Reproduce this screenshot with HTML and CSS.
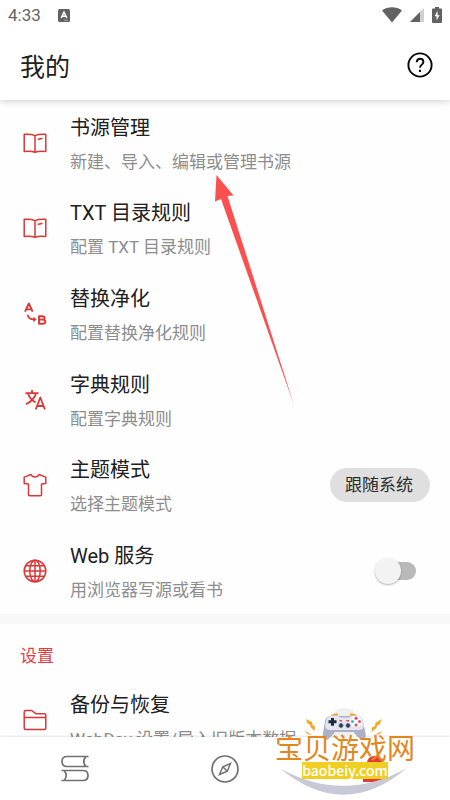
FILE: index.html
```html
<!DOCTYPE html>
<html lang="zh-CN">
<head>
<meta charset="utf-8">
<meta name="viewport" content="width=device-width, initial-scale=1">
<title>我的</title>
<link rel="stylesheet" href="styles.css">
</head>
<body>
<div class="app">
  <header class="top">
    <div class="status">
      <span class="clock">4:33</span>
      <svg class="status-badge" width="12" height="13" viewBox="0 0 12 13"><rect width="12" height="13" rx="1.5" fill="#626262"/><path d="M3.2 9 6 3.2 8.8 9M4.2 7.2h3.6" fill="none" stroke="#fff" stroke-width="1.5"/><path d="M6 11.2h4" stroke="#aaa"/></svg>
      <span class="status-right">
        <svg width="20" height="16" viewBox="0 0 20 16"><path d="M0 3.6C5.5-.8 14.5-.8 20 3.6L10 15.5Z" fill="#626262"/></svg>
        <svg width="14" height="14" viewBox="0 0 14 14"><path d="M0 14 14 0V14Z" fill="#d0d0d0"/><path d="M0 14 10 4V14Z" fill="#626262"/></svg>
        <svg width="10" height="16" viewBox="0 0 10 16"><path d="M3 0h4v1.6h2Q10 1.6 10 2.6V15q0 1-1 1H1q-1 0-1-1V2.600Q0 1.600 1 1.600H3Z" fill="#626262"/><path d="M5.600 3.800 2.600 9.300h2v4.200L7.600 8h-2Z" fill="#fff"/></svg>
      </span>
    </div>
    <div class="title-bar">
      <h1>我的</h1>
      <button class="help" type="button" aria-label="帮助">
        <svg width="26" height="26" viewBox="0 0 26 26" fill="none" stroke="#080808"><circle cx="13" cy="13" r="11.600" stroke-width="1.900"/><path d="M9.700 10.300C9.700 8 11 6.800 13 6.800s3.400 1.300 3.400 3.200c0 2.600-3.400 2.700-3.400 5.700" stroke-width="1.900"/><path d="M13 17.800v2.100" stroke-width="2"/></svg>
      </button>
    </div>
  </header>

  <main class="content">
    <div class="list">
      <a class="row" href="#sources">
        <svg class="icon" viewBox="0 0 24 24"><path d="M12 4.600C8.500 3 5 3 1.200 3.300v17.200C5 20 8.500 20 12 21.200c3.500-1.200 7-1.200 10.800-.7V3.300C19 3 15.500 3 12 4.600Zm0 0v16.600M14.700 8.500l4.800-1.300"/></svg>
        <span class="text"><span class="name">书源管理</span><span class="desc">新建、导入、编辑或管理书源</span></span>
      </a>
      <a class="row" href="#toc">
        <svg class="icon" viewBox="0 0 24 24"><path d="M12 4.600C8.500 3 5 3 1.200 3.300v17.200C5 20 8.500 20 12 21.200c3.500-1.200 7-1.200 10.800-.7V3.300C19 3 15.500 3 12 4.600Zm0 0v16.600M14.700 8.500l4.800-1.300"/></svg>
        <span class="text"><span class="name">TXT 目录规则</span><span class="desc">配置 TXT 目录规则</span></span>
      </a>
      <a class="row" href="#replace">
        <svg class="icon" viewBox="0 0 24 24"><path stroke-width="1.900" d="M2 9.700 5.800 1.500l3.800 8.200M3.200 7.400h5.200"/><path stroke-width="1.900" d="M16 14.200v7.600h3.500q2.900 0 2.900-2.100t-2.900-2.100H16h3q2.600 0 2.600-1.700T19 14.200Z"/><path stroke-width="1.700" d="M4.500 12.800q1 4.500 6.500 4.600"/><path d="M10.300 14.700 13.700 17.500l-3.400 2.700Z" fill="currentColor" stroke="none"/></svg>
        <span class="text"><span class="name">替换净化</span><span class="desc">配置替换净化规则</span></span>
      </a>
      <a class="row" href="#dict">
        <svg class="icon" viewBox="0 0 24 24"><path stroke-width="1.800" d="M2.500 5.200h13M9 2v3M13 5.200C11.800 10 7.500 14 3 16.200M5 5.200c1.200 4 4 7.300 7.500 9.200M12.700 21.500l4.600-12 4.600 12M14 18h6.600"/></svg>
        <span class="text"><span class="name">字典规则</span><span class="desc">配置字典规则</span></span>
      </a>
      <div class="row">
        <svg class="icon" viewBox="0 0 24 24"><path d="M8 1.500Q9 4 12 4t4-2.500l6.800 2.600v6.500l-4.300.5v10.500q0 1.200-1.200 1.200H6.700q-1.200 0-1.200-1.200V11.100l-4.300-.5V4.100Z"/></svg>
        <span class="text"><label class="name" for="theme">主题模式</label><span class="desc">选择主题模式</span></span>
        <select class="pill" id="theme"><option>跟随系统</option></select>
      </div>
      <div class="row">
        <svg class="icon" viewBox="0 0 24 24"><circle cx="12" cy="12" r="10.800"/><ellipse cx="12" cy="12" rx="5.200" ry="10.800"/><path d="M12 1.200v21.600M1.200 12h21.600M3 6.700h18M3 17.300h18"/></svg>
        <span class="text"><label class="name" for="web">Web 服务</label><span class="desc">用浏览器写源或看书</span></span>
        <input class="switch" id="web" type="checkbox" role="switch">
      </div>
    </div>
    <section class="settings">
      <h2>设置</h2>
      <a class="row" href="#backup">
        <svg class="icon" viewBox="0 0 24 24"><path d="M1.200 20V4q0-1.500 1.500-1.500h6l4 3.200h8.600q1.500 0 1.500 1.500V20q0 1.500-1.500 1.500H2.700Q1.200 21.500 1.200 20ZM1.200 9.600h21.600"/></svg>
        <span class="text"><span class="name">备份与恢复</span><span class="desc">WebDav 设置/导入旧版本数据</span></span>
      </a>
    </section>
  </main>

  <nav class="tabs">
    <a href="#shelf" aria-label="书架"><svg width="30" height="30" viewBox="0 0 30 30" fill="none" stroke="#717171" stroke-width="1.700"><path d="M28.500 2.500H7q-5 0-5 5t5 5h21.500M25.800 2.500q-4 5 0 10M1.500 16.500H23q5 0 5 5t-5 5H1.500M4.200 16.500q4 5 0 10"/></svg></a>
    <a href="#discover" aria-label="发现"><svg width="30" height="30" viewBox="0 0 30 30" fill="none" stroke="#717171" stroke-width="1.700"><circle cx="15" cy="15" r="13"/><path d="m20.500 9.500-3.300 7.700-7.700 3.300 3.300-7.700ZM12.800 12.800l4.400 4.400" stroke-width="1.500"/></svg></a>
    <a href="#me" aria-label="我的"><svg width="30" height="30" viewBox="0 0 30 30" fill="#e53935"><path d="M15 2q8 0 8 8t-8 8-8-8 8-8Z"/><path d="M3 28v-3q0-6 7-7h10q7 1 7 7v3Z"/></svg></a>
  </nav>

  <svg class="arrow" width="80" height="232" viewBox="0 0 80 232"><path d="M2.500 1 19.500 21.500 13.500 22 80 231 7 25 1 27.500Z" fill="#fb5050"/></svg>

  <div class="watermark">
    <svg class="art" width="140" height="92" viewBox="0 0 140 92">
      <circle cx="69" cy="19" r="15" fill="#efefef"/>
      <path d="M6 65Q69 99 132 64 69 117 6 65Z" fill="#c7c9d6"/>
      <g fill="#f5a623"><path d="m31 15 6 3 .5 3 2.500 1.500-.5 4.500-4-4-.5-2.500-2.500-1Z"/><path d="m106.500 15-6 4-.5 3-3 1.500-.5 4.500 5-4 .5-2.500 3-1.500Z"/><path d="m30 27 7 4-5-1Zm77 0-7 4 5-1Z"/></g>
      <path d="M56 12v-1q3-2 7-1.500v3M75 12.500v-3q4-.5 7 1.500v1" fill="#f0a028"/>
      <path d="M56 12h26q5 0 6 5l2.500 12q1 7-3 7-3 0-9-8H60q-6 8-9 8-4 0-3-7l2-12q1-5 6-5Z" fill="#aeb0c4"/>
      <path d="M57 11.500h6q1 2 3 2h7q2 0 3-2h6q4 0 5.500 4L89 22q-1 4-5 4H55q-4 0-5-4l1.500-6.500Q53 11.500 57 11.500Z" fill="#e4e5ef"/>
      <circle cx="81" cy="17.500" r="5.800" fill="#fafaff"/>
      <path d="M56 14h3v2.300h2.500v3H59v2.400h-3v-2.400h-2.500v-3H56Z" fill="#182c3d"/>
      <circle cx="81" cy="14.200" r="1.500" fill="#f04050"/><circle cx="81" cy="21" r="1.500" fill="#e84860"/><circle cx="77.500" cy="17.600" r="1.500" fill="#45b8cf"/><circle cx="84.500" cy="17.600" r="1.500" fill="#e95060"/>
      <g fill="#263746" stroke="#596f94"><circle cx="66" cy="21.500" r="2"/><circle cx="73" cy="21.500" r="2"/></g>
      <path d="M64.500 16.700H67m4.500 0H74" stroke="#e84850" stroke-width="1.500"/>
    </svg>
    <span class="brand">宝贝游戏网</span>
    <span class="site">baobeiy.com</span>
  </div>
</div>
</body>
</html>
```
FILE: styles.css
```css
* { box-sizing: border-box; }

body {
  margin: 0;
  background: #fefefe;
  color: #202020;
  font-family: Roboto, "Noto Sans CJK SC", sans-serif;
}

a { color: inherit; text-decoration: none; }

.app {
  position: relative;
  display: flex;
  flex-direction: column;
  height: 100vh;
  overflow: hidden;
}

.top {
  flex: none;
  z-index: 1;
  background: #fff;
  box-shadow: 0 1px 7px rgba(0, 0, 0, 0.2);
}

.status {
  display: flex;
  align-items: center;
  gap: 17px;
  height: 30px;
  padding: 0 8px;
  color: #666;
  font-size: 17px;
}

.status-right {
  display: flex;
  align-items: center;
  gap: 8px;
  margin-left: auto;
}

.title-bar {
  display: flex;
  align-items: center;
  justify-content: space-between;
  height: 70px;
  padding: 0 17px 0 20px;
}

h1 {
  margin: 0;
  font-size: 25px;
  font-weight: 400;
}

.help {
  display: flex;
  padding: 0;
  border: 0;
  background: none;
}

.content {
  flex: 1;
  min-height: 0;
  overflow: hidden;
}

.list {
  display: grid;
  grid-auto-rows: 1fr;
  min-height: 514px;
}

.row {
  display: flex;
  align-items: center;
  padding: 0 20px 0 23px;
}

.icon {
  flex: none;
  width: 24px;
  height: 24px;
  fill: none;
  stroke: currentColor;
  stroke-width: 1.5;
  stroke-linejoin: round;
  color: #dc3737;
}

.text {
  display: flex;
  flex: 1;
  flex-direction: column;
  margin-left: 23px;
  padding-top: 4px;
  line-height: 34px;
  white-space: nowrap;
}

.name { font-size: 20px; }

.desc {
  color: #8d8d8d;
  font-size: 17px;
}

.pill {
  width: 100px;
  height: 34px;
  padding: 0 15px;
  border: 0;
  border-radius: 17px;
  appearance: none;
  background: #dfdfdf;
  color: #2b2b2b;
  font-family: inherit;
  font-size: 17px;
}

.switch {
  position: relative;
  width: 40px;
  height: 18px;
  margin: 0 14px 0 0;
  border-radius: 9px;
  appearance: none;
  background: linear-gradient(90deg, transparent 10px, #b9b9b9 10px);
}

.switch::before {
  content: "";
  position: absolute;
  top: -4px;
  left: -1px;
  width: 26px;
  height: 26px;
  border-radius: 50%;
  background: #f3f3f3;
  box-shadow: 0 1px 2px rgba(0, 0, 0, 0.3);
}

.settings { border-top: 10px solid #f8f8f8; }

h2 {
  margin: 0;
  padding: 15px 20px 4px;
  color: #e53c3c;
  font-size: 17px;
  font-weight: 400;
  line-height: 34px;
}

.settings .row { height: 86px; }

.tabs {
  display: flex;
  flex: none;
  z-index: 1;
  height: 63px;
  background: #fff;
  box-shadow: 0 -1px 2px rgba(0, 0, 0, 0.1);
}

.tabs a {
  display: flex;
  flex: 1;
  align-items: center;
  justify-content: center;
}

.arrow {
  position: absolute;
  top: 174px;
  left: 214px;
}

.watermark {
  position: absolute;
  right: 35px;
  bottom: 4px;
  z-index: 2;
  display: flex;
  flex-direction: column;
  align-items: center;
  width: 140px;
  height: 92px;
  padding-top: 28px;
  font-family: "Noto Sans CJK SC", sans-serif;
}

.art {
  position: absolute;
  top: 0;
  left: 0;
}

.brand {
  position: relative;
  color: #e3871d;
  font-size: 28px;
  line-height: 30px;
  white-space: nowrap;
}

.site {
  position: relative;
  width: 86px;
  background: #efcf22;
  color: #fff;
  font-size: 14px;
  font-weight: 500;
  line-height: 17px;
  text-align: center;
}
```
